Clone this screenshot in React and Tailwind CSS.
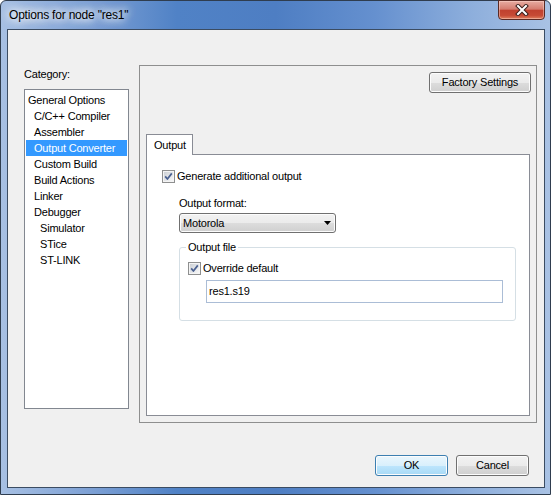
import React from "react";

const font = { fontFamily: '"Liberation Sans", Arial, sans-serif' };

const categories = [
  { label: "General Options", level: 0 },
  { label: "C/C++ Compiler", level: 1 },
  { label: "Assembler", level: 1 },
  { label: "Output Converter", level: 1, selected: true },
  { label: "Custom Build", level: 1 },
  { label: "Build Actions", level: 1 },
  { label: "Linker", level: 1 },
  { label: "Debugger", level: 1 },
  { label: "Simulator", level: 2 },
  { label: "STice", level: 2 },
  { label: "ST-LINK", level: 2 },
];

const indent = ["pl-[2px]", "pl-[8px]", "pl-[14px]"];

function CheckBox() {
  return (
    <svg width="13" height="13" viewBox="0 0 13 13" className="shrink-0">
      <defs>
        <linearGradient id="cbg" x1="0" y1="0" x2="1" y2="1">
          <stop offset="0" stopColor="#cdd1d6" />
          <stop offset="1" stopColor="#f7f7f7" />
        </linearGradient>
      </defs>
      <rect x="0.5" y="0.5" width="12" height="12" fill="#f4f4f4" stroke="#8e8f8f" />
      <rect x="2" y="2" width="9" height="9" fill="url(#cbg)" />
      <path d="M3.2 6.4 L5.4 9 L9.8 3.4" fill="none" stroke="#4a6090" strokeWidth="1.7" strokeLinejoin="round" />
    </svg>
  );
}

function Button({ children, primary, className = "" }) {
  return (
    <button
      className={`h-[21px] rounded-[3px] border text-[11px] tracking-[-0.2px] text-black leading-none flex items-center justify-center shadow-[inset_0_0_0_1px_#fcfcfc] ${
        primary
          ? "border-[#3c7fb1] bg-[linear-gradient(180deg,#eaf6fd_0%,#d9f0fc_50%,#bee6fd_50%,#a7d9f5_100%)]"
          : "border-[#707070] bg-[linear-gradient(180deg,#f2f2f2_0%,#ebebeb_50%,#dddddd_50%,#cfcfcf_100%)]"
      } ${className}`}
      style={font}
    >
      {children}
    </button>
  );
}

function App() {
  return (
    <div
      className="w-[551px] h-[495px] flex flex-col rounded-t-[6px] border border-[#2f3d4f] bg-[linear-gradient(90deg,#a7c0e3_0%,#7ea1d5_16%,#5082c6_32%,#4e7ec3_50%,#6590cf_68%,#8eafdc_86%,#a9c2e4_100%)] text-black"
      style={font}
    >
      <div className="h-[28px] flex items-start pl-[8px] pr-[5px]">
        <div className="h-[28px] flex items-center text-[12px] tracking-[-0.2px] [text-shadow:0_0_8px_#fff,0_0_10px_#fff,0_0_12px_#fff]">
          Options for node "res1"
        </div>
        <div className="ml-auto -mt-px w-[47px] h-[20px] rounded-b-[4px] border border-[#5a2a24] bg-[linear-gradient(180deg,#e7aca2_0%,#d47c6f_45%,#c0412f_52%,#c64a35_80%,#e0805f_100%)] shadow-[inset_0_0_0_1px_rgba(255,220,210,0.45)] flex items-center justify-center">
          <svg width="14" height="12" viewBox="0 0 14 12">
            <path d="M3 2 L11 10 M11 2 L3 10" stroke="#3a1f1c" strokeWidth="4" strokeLinecap="square" />
            <path d="M3 2 L11 10 M11 2 L3 10" stroke="#ffffff" strokeWidth="2" strokeLinecap="square" />
          </svg>
        </div>
      </div>

      <div className="flex-1 ml-[6px] mr-[5px] mb-[6px] border border-[#3b4c62] bg-[#f0f0f0] flex flex-col text-[11px] tracking-[-0.2px]">
        <div className="flex items-start">
          <div className="ml-[16px] mt-[38px] w-[105px]">
            <div className="h-[13px] leading-[13px]">Category:</div>
            <div className="mt-[8px] h-[320px] border border-[#828790] bg-white pt-[2px]">
              {categories.map((c) => (
                <div
                  key={c.label}
                  className={`mx-[1px] h-[16px] leading-[16px] whitespace-nowrap ${indent[c.level]} ${
                    c.selected ? "bg-[#3399ff] text-white" : ""
                  }`}
                >
                  {c.label}
                </div>
              ))}
            </div>
          </div>

          <div className="ml-[10px] mt-[35px] w-[398px] h-[358px] border border-[#8e8f8f] flex flex-col">
            <div className="flex justify-end pr-[5px] pt-[6px]">
              <Button className="w-[102px]">Factory Settings</Button>
            </div>

            <div className="mx-[6px] mt-[41px] mb-[6px] flex-1 flex flex-col">
              <div className="relative z-10 -mb-px w-[47px] h-[21px] border-x border-t border-[#898c95] bg-white pl-[7px] leading-[21px]">
                Output
              </div>
              <div className="flex-1 border border-[#898c95] bg-white">
                <div className="ml-[15px] mt-[15px] h-[13px] flex items-center gap-[2px]">
                  <CheckBox />
                  <span className="leading-[13px]">Generate additional output</span>
                </div>

                <div className="ml-[32px] mt-[14px] h-[13px] leading-[13px]">Output format:</div>
                <div className="ml-[32px] mt-[3px] w-[157px] h-[20px] rounded-[3px] border border-[#707070] bg-[linear-gradient(180deg,#f2f2f2_0%,#ebebeb_50%,#dddddd_50%,#cfcfcf_100%)] shadow-[inset_0_0_0_1px_#fcfcfc] flex items-center pl-[3px] pr-[4px]">
                  <span className="leading-none">Motorola</span>
                  <svg width="7" height="4" viewBox="0 0 7 4" className="ml-auto">
                    <path d="M0 0 H7 L3.5 4 Z" fill="#000" />
                  </svg>
                </div>

                <fieldset className="ml-[32px] mt-[8px] w-[337px] h-[80px] rounded-[3px] border border-[#d5dfe5]">
                  <legend className="ml-[6px] px-[2px] h-[13px] leading-[13px]">Output file</legend>
                  <div className="ml-[8px] mt-[8px] h-[13px] flex items-center gap-[2px]">
                    <CheckBox />
                    <span className="leading-[13px]">Override default</span>
                  </div>
                  <div className="ml-[26px] mt-[5px] w-[297px] h-[23px] border border-[#abbdd6] bg-white flex items-center pl-[2px]">
                    res1.s19
                  </div>
                </fieldset>
              </div>
            </div>
          </div>
        </div>

        <div className="mt-auto flex justify-end gap-[8px] pr-[15px] pb-[11px]">
          <Button primary className="w-[73px]">OK</Button>
          <Button className="w-[73px]">Cancel</Button>
        </div>
      </div>
    </div>
  );
}

export default App;
